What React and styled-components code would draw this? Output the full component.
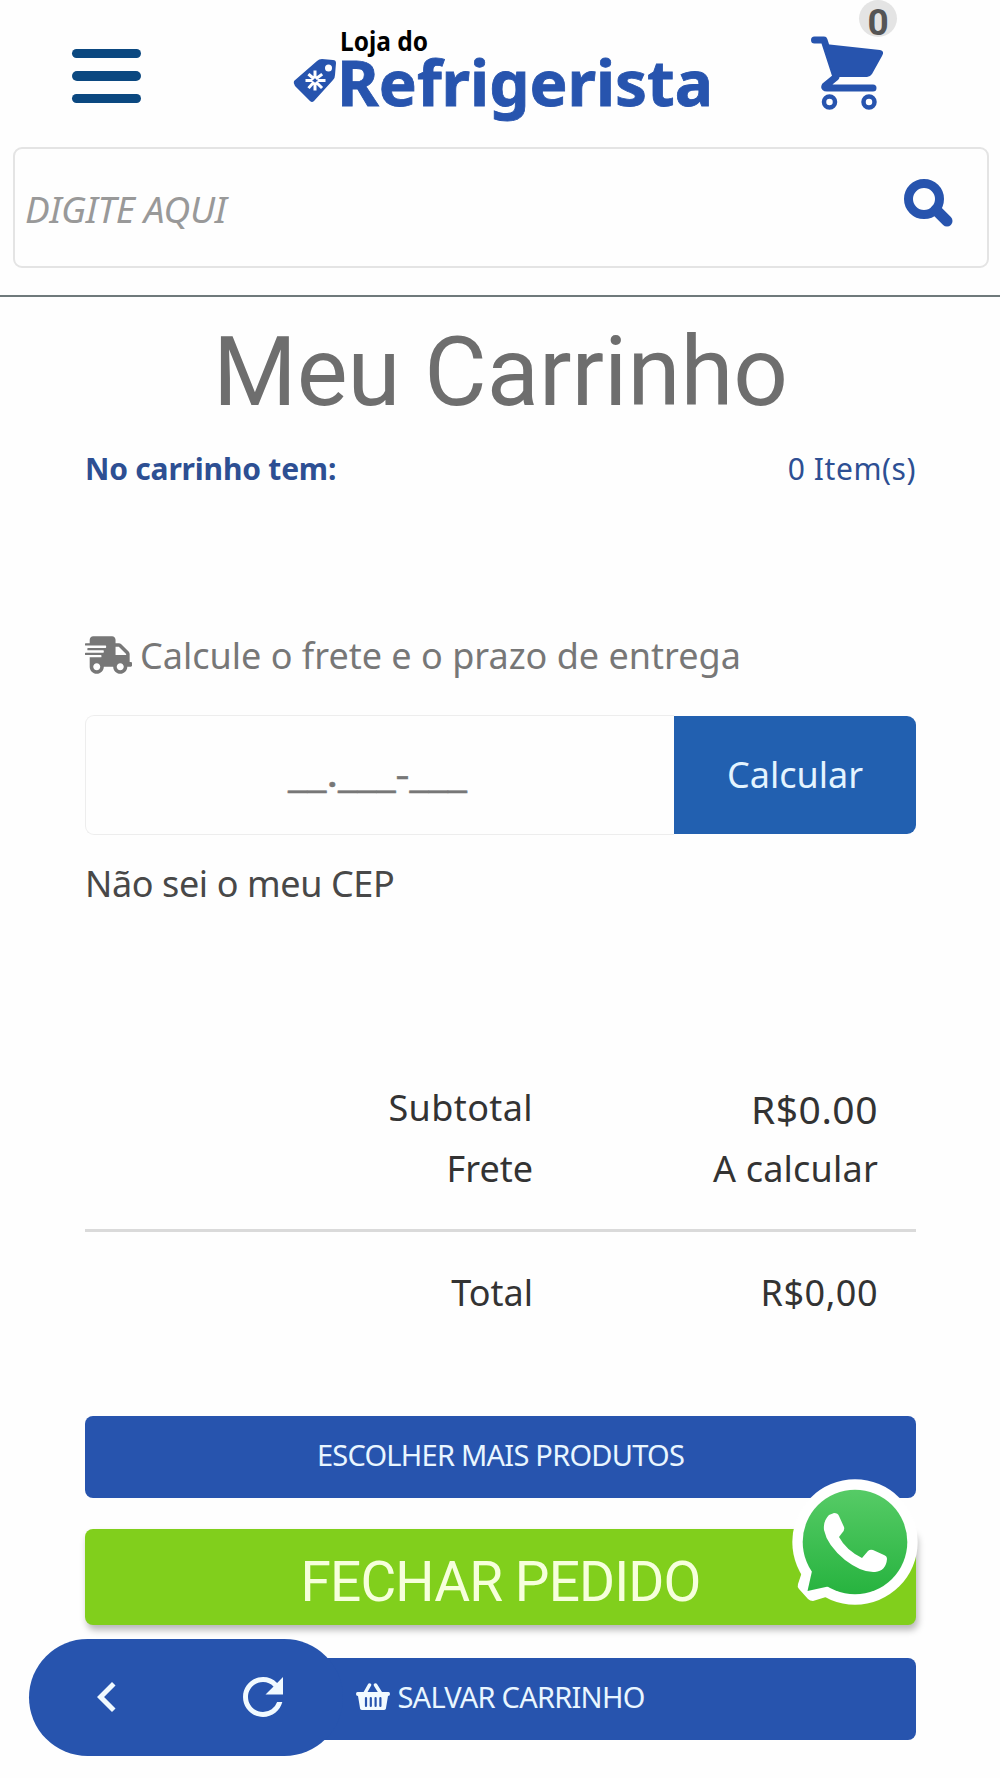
import React from 'react'
import styled, { createGlobalStyle } from 'styled-components'
import { FaShippingFast } from 'react-icons/fa'
import { MdChevronLeft, MdRefresh } from 'react-icons/md'

const BLUE = '#2754ae'

function Logo() {
  return (
    <LogoSvg viewBox="0 0 425 96">
      <text x="50" y="25" textLength="88" lengthAdjust="spacingAndGlyphs" fontSize="26" fontWeight="700" fill="#000">Loja do</text>
      <path d="M4 55 L27 35 Q29 33 32 33 L43 34 Q46 34 46 37 L45 49 Q45 52 43 54 L24 75 Q22 77 20 75 L5 60 Q3 57 4 55 Z" fill={BLUE} />
      <circle cx="38.500" cy="42" r="3.500" fill="#fff" />
      <g stroke="#fff" strokeWidth="3" strokeLinecap="square">
        <path d="M25 46V51M25 58V63M17 54.500H21M29 54.500H34M19.500 49L23 52M27 57L31 61M31 49L27 52M23 57L19.500 61" />
      </g>
      <text x="47" y="79.500" textLength="376" lengthAdjust="spacingAndGlyphs" fontSize="63" fontWeight="700" fill={BLUE} stroke={BLUE} strokeWidth="0.800">Refrigerista</text>
    </LogoSvg>
  )
}

function CartIcon() {
  return (
    <CartSvg viewBox="0 0 74 76">
      <path d="M3.500 4H13L25 41L14 50Q13 52 16 52H62" fill="none" stroke={BLUE} strokeWidth="7" strokeLinecap="round" strokeLinejoin="round" />
      <path d="M14 8L69 14Q74 15 71 20L61 38Q59 41 56 41H22Z" fill={BLUE} />
      <circle cx="18.500" cy="66" r="5.500" fill="#fff" stroke={BLUE} strokeWidth="4.500" />
      <circle cx="58" cy="66" r="5.500" fill="#fff" stroke={BLUE} strokeWidth="4.500" />
    </CartSvg>
  )
}

function SearchIcon() {
  return (
    <svg width="50" height="50" viewBox="0 0 50 50">
      <circle cx="21" cy="20" r="15.500" fill="none" stroke={BLUE} strokeWidth="9" />
      <path d="M33 31L44 42" stroke={BLUE} strokeWidth="11" strokeLinecap="round" />
    </svg>
  )
}

function BasketIcon() {
  return (
    <svg width="34" height="28" viewBox="0 0 34 28">
      <path d="M13.500 2L9 10M19.500 2L24.500 10" stroke="#f1faff" strokeWidth="3.500" strokeLinecap="round" />
      <path d="M1.500 9H32.500Q34 9 34 11Q34 13 32 13L30 25Q30 27 27 27H7Q4 27 4 25L2 13Q0 13 0 11Q0 9 1.500 9Z" fill="#f1faff" />
      <path d="M10 15V23M14.800 15V23M19.600 15V23M24.400 15V23" stroke={BLUE} strokeWidth="2.200" strokeLinecap="round" />
    </svg>
  )
}

function WhatsappIcon() {
  return (
    <WhatsappSvg viewBox="0 0 126 126">
      <defs>
        <linearGradient id="bubble" gradientUnits="userSpaceOnUse" x1="0" y1="11" x2="0" y2="115">
          <stop offset="0" stopColor="#56cb66" />
          <stop offset="1" stopColor="#27b33f" />
        </linearGradient>
      </defs>
      <circle cx="63" cy="63" r="62.700" fill="#fff" />
      <path d="M10 93L6 105Q5 108 7 110L16 120Q18 122 21 122L34 118L60 70Z" fill="#fff" />
      <circle cx="63" cy="63" r="52.300" fill="url(#bubble)" />
      <path d="M20 92L15.500 112L36 107.500L60 70Z" fill="url(#bubble)" />
      <path d="M37 36L42 34Q46 34 47 37L52 48Q53 51 50 54L47 58Q54 71 70 79L76 72Q78 70 81 71L92 76Q95 77 95 80Q94 92 83 93Q70 94 53 81Q35 66 32 51Q31 42 37 36Z" fill="#fff" />
    </WhatsappSvg>
  )
}

const App = () => {
  return (
    <Page>
      <GlobalStyle />
      <Header>
        <TopBar>
          <Menu><Bar /><Bar /><Bar /></Menu>
          <Logo />
          <Cart>
            <CartIcon />
            <Badge>0</Badge>
          </Cart>
        </TopBar>
        <SearchBox>
          <Placeholder>DIGITE AQUI</Placeholder>
          <SearchIcon />
        </SearchBox>
      </Header>

      <Content>
        <Title>Meu Carrinho</Title>
        <Summary>
          <Text $bold $spacing={-0.2}>No carrinho tem:</Text>
          <Text $spacing={0.55}>0 Item(s)</Text>
        </Summary>

        <Shipping>
          <FaShippingFast />
          <Text>Calcule o frete e o prazo de entrega</Text>
        </Shipping>
        <ZipForm>
          <ZipInput><Mask>__.___-___</Mask></ZipInput>
          <ZipButton>Calcular</ZipButton>
        </ZipForm>
        <ZipHelp><Text $spacing={-0.4}>Não sei o meu CEP</Text></ZipHelp>

        <Totals>
          <Row>
            <Text $spacing={0.4}>Subtotal</Text>
            <Price>R$0.00</Price>
          </Row>
          <Row>
            <Text>Frete</Text>
            <Text $spacing={0.2}>A calcular</Text>
          </Row>
          <Divider />
          <Row $last>
            <Text>Total</Text>
            <Text $spacing={0.5}>R$0,00</Text>
          </Row>
        </Totals>

        <Button><Text $spacing={-0.75}>ESCOLHER MAIS PRODUTOS</Text></Button>
        <Checkout>FECHAR PEDIDO</Checkout>
        <Button>
          <BasketIcon />
          <Text $spacing={-0.75}>SALVAR CARRINHO</Text>
        </Button>
      </Content>

      <BrowserNav>
        <MdChevronLeft />
        <MdRefresh />
      </BrowserNav>
      <WhatsappIcon />
    </Page>
  )
}

const GlobalStyle = createGlobalStyle`
  * {
    box-sizing: border-box;
  }
  body {
    margin: 0;
    background: #fefefe;
    font-family: "Noto Sans", sans-serif;
  }
`

const Page = styled.div`
  position: relative;
  width: 1000px;
  height: 1778px;
  overflow: hidden;
`

const Header = styled.header`
  height: 297px;
  border-bottom: 2px solid #6f797b;
`

const TopBar = styled.div`
  display: flex;
  align-items: flex-start;
  height: 147px;
  padding-left: 72px;
`

const Menu = styled.div`
  display: flex;
  flex-direction: column;
  gap: 13px;
  width: 69px;
  margin-top: 48.500px;
`

const Bar = styled.span`
  height: 9.500px;
  border-radius: 5px;
  background: #0b4880;
`

const LogoSvg = styled.svg`
  width: 425px;
  height: 96px;
  margin: 26px 0 0 149px;
  overflow: visible;
  font-family: "Noto Sans", sans-serif;
`

const Cart = styled.div`
  position: relative;
  margin: 36px 0 0 96px;
`

const CartSvg = styled.svg`
  display: block;
  width: 74px;
  height: 76px;
`

const Badge = styled.span`
  position: absolute;
  top: -36px;
  left: 48px;
  width: 38px;
  height: 37px;
  border-radius: 50%;
  background: #e4e4e4;
  color: #555;
  font: 700 37px/45px Roboto, sans-serif;
  text-align: center;
`

const SearchBox = styled.div`
  display: flex;
  align-items: flex-start;
  justify-content: space-between;
  height: 121px;
  margin: 0 11px 0 13px;
  padding: 30px 34px 0 10px;
  border: 2px solid #e4e4e4;
  border-radius: 9px;
`

const Placeholder = styled.span`
  color: #999;
  font-size: 37px;
  font-style: italic;
  letter-spacing: -0.3px;
  line-height: 60px;
`

const Content = styled.main`
  padding: 15px 84px 0 85px;
`

const Title = styled.h1`
  margin: 0;
  color: #6e6e6e;
  font: 400 96px/120px Roboto, sans-serif;
  text-align: center;
`

const Text = styled.span`
  font-weight: ${props => props.$bold ? 700 : 400};
  letter-spacing: ${props => props.$spacing || 0}px;
  white-space: nowrap;
`

const Summary = styled.div`
  display: flex;
  justify-content: space-between;
  margin-top: 17px;
  color: #2d4f93;
  font-size: 30px;
  line-height: 40px;
`

const Shipping = styled.div`
  display: flex;
  align-items: center;
  gap: 8px;
  height: 50px;
  margin-top: 141px;
  color: #777;
  font-size: 36px;
  line-height: 50px;
  svg {
    width: 47px;
    height: 38px;
  }
  ${Text} {
    padding-top: 2px;
  }
`

const ZipForm = styled.div`
  display: flex;
  align-items: center;
  height: 120px;
  margin-top: 35px;
  font-size: 36px;
`

const ZipInput = styled.div`
  display: flex;
  align-items: center;
  justify-content: center;
  flex: 1;
  height: 120px;
  padding: 0 5px 3px 0;
  border: 1px solid #ededed;
  border-right: 0;
  border-radius: 9px 0 0 9px;
  color: #777;
`

const Mask = styled.span`
  transform: scaleX(1.2);
  -webkit-text-stroke: 0.5px #777;
`

const ZipButton = styled.div`
  display: flex;
  align-items: center;
  justify-content: center;
  width: 242px;
  height: 118px;
  padding-bottom: 1px;
  border-radius: 0 9px 9px 0;
  background: #2260b0;
  color: #e4f4ff;
`

const ZipHelp = styled.div`
  margin-top: 24px;
  color: #484848;
  font-size: 36px;
  line-height: 50px;
`

const Totals = styled.div`
  margin-top: 168px;
  color: #333;
  font-size: 36px;
`

const Row = styled.div`
  display: grid;
  grid-template-columns: 448px 1fr;
  height: 61px;
  padding-right: 38px;
  line-height: ${props => props.$last ? 63 : 61}px;
  text-align: right;
`

const Price = styled.span`
  height: 61px;
  padding-top: 1px;
  font-size: 39px;
  letter-spacing: 0.5px;
`

const Divider = styled.div`
  height: 3px;
  margin: 30px 0 29px;
  background: #dadada;
`

const Button = styled.div`
  display: flex;
  align-items: center;
  justify-content: center;
  gap: 7px;
  height: 82px;
  margin-top: 33px;
  border-radius: 8px;
  background: ${BLUE};
  color: #e9f6ff;
  font-size: 29px;
  ${Totals} + & {
    margin-top: 94px;
  }
  ${Text} {
    padding-bottom: 5px;
  }
  svg {
    margin-bottom: 4px;
  }
`

const Checkout = styled.div`
  height: 96px;
  margin-top: 31px;
  border-radius: 8px;
  background: #81cf1c;
  box-shadow: 2px 5px 7px rgba(0, 0, 0, 0.28);
  color: #f6ffdc;
  font: 400 55px/106px Roboto, sans-serif;
  letter-spacing: -0.9px;
  text-align: center;
`

const BrowserNav = styled.nav`
  position: absolute;
  top: 1638.500px;
  left: 29px;
  display: flex;
  align-items: center;
  justify-content: space-between;
  width: 314px;
  height: 117px;
  padding: 0 50px 0 48px;
  border-radius: 59px;
  background: ${BLUE};
  color: #f1faff;
  svg {
    width: 60px;
    height: 60px;
  }
`

const WhatsappSvg = styled.svg`
  position: absolute;
  top: 1479px;
  left: 792px;
  width: 126px;
  height: 126px;
`

export default App
